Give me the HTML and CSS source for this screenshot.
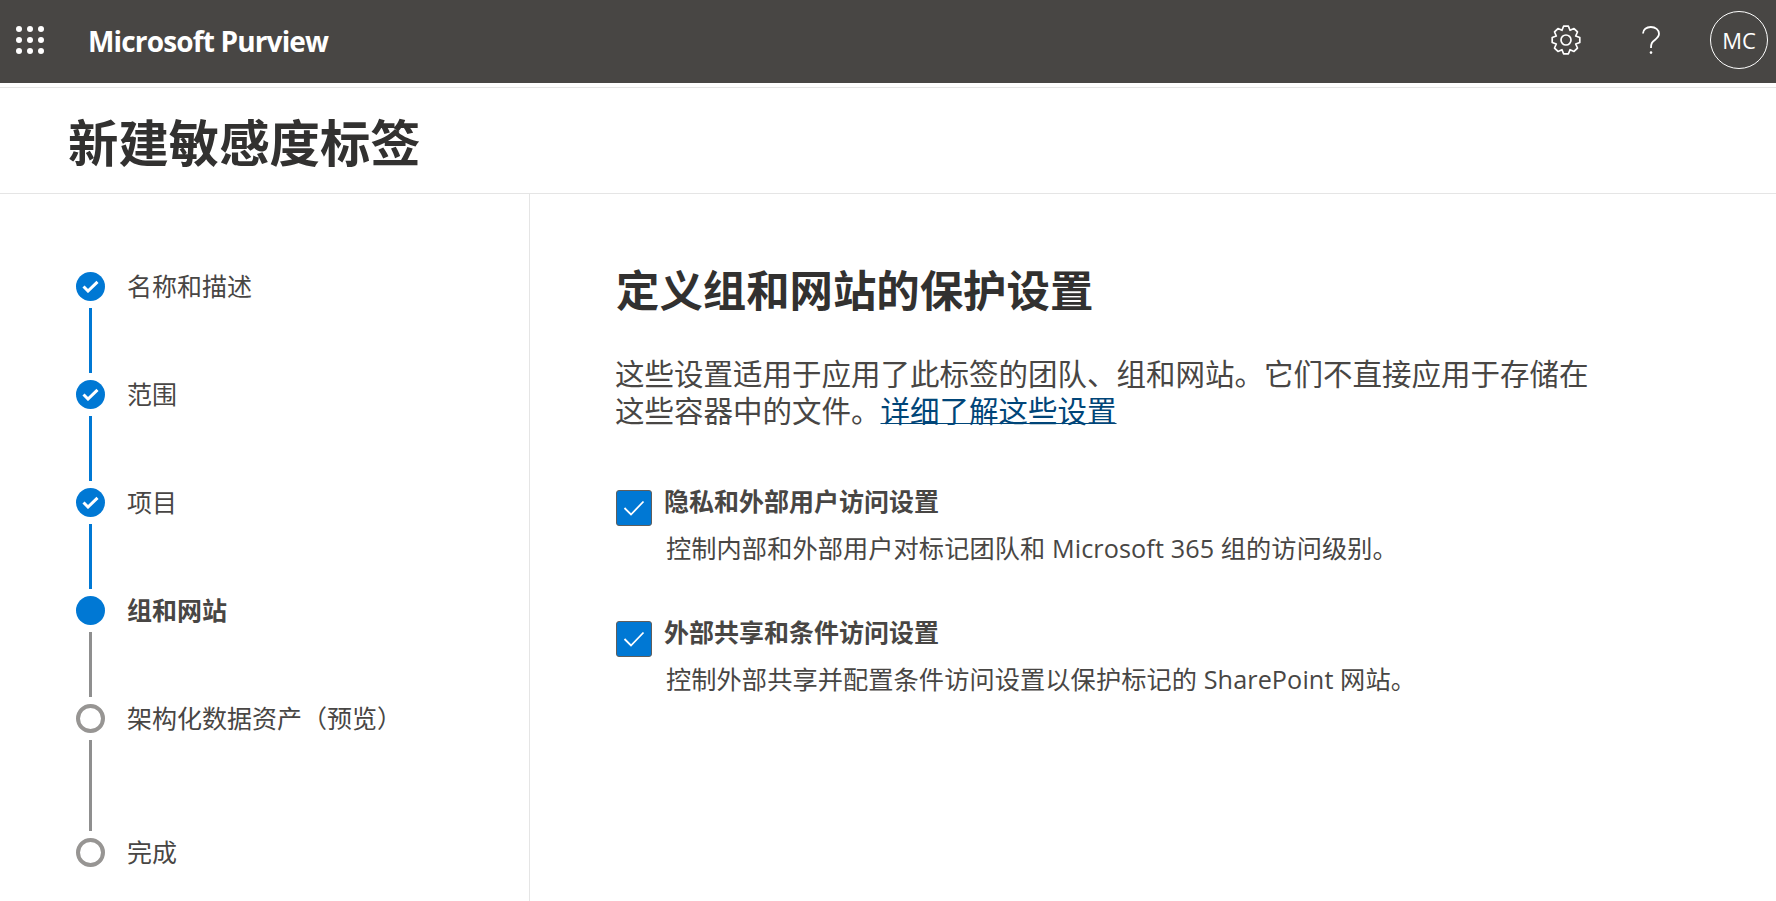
FILE: index.html
```html
<!DOCTYPE html>
<html lang="zh-CN">
  <head>
    <meta charset="UTF-8" />
    <meta name="viewport" content="width=device-width, initial-scale=1.0" />
    <title>新建敏感度标签</title>
    <link rel="stylesheet" href="styles.css">
  </head>
  <body>
    <header class="topbar">
      <svg class="waffle" width="30" height="30" viewBox="0 0 30 30" fill="#fff">
        <circle cx="4" cy="4" r="3" /><circle cx="15" cy="4" r="3" /><circle cx="26" cy="4" r="3" />
        <circle cx="4" cy="15" r="3" /><circle cx="15" cy="15" r="3" /><circle cx="26" cy="15" r="3" />
        <circle cx="4" cy="26" r="3" /><circle cx="15" cy="26" r="3" /><circle cx="26" cy="26" r="3" />
      </svg>
      <span class="brand">Microsoft Purview</span>
      <svg class="gear" width="30" height="30" viewBox="0 0 30 30" fill="none" stroke="#fff" stroke-width="1.7" stroke-linejoin="round">
        <path d="M28.79 12.57L28.79 17.43L24.7 19.02L26.47 23.03L23.03 26.47L19.02 24.7L17.43 28.79L12.57 28.79L10.98 24.7L6.97 26.47L3.53 23.03L5.3 19.02L1.21 17.43L1.21 12.57L5.3 10.98L3.53 6.97L6.97 3.53L10.98 5.3L12.57 1.21L17.43 1.21L19.02 5.3L23.03 3.53L26.47 6.97L24.7 10.98Z" />
        <circle cx="15" cy="15" r="5" />
      </svg>
      <svg class="help" width="18" height="29" viewBox="0 0 18 29" fill="none" stroke="#fff" stroke-width="1.8">
        <path d="M1 7.5C1 3.5 4.5 1 8.8 1C13.5 1 17 3.8 17 7.8C17 10.8 15 12.3 12.8 14C10 16.1 9 17.3 9 22" />
        <circle cx="9" cy="26.6" r="1.3" fill="#fff" stroke="none" />
      </svg>
      <div class="avatar">MC</div>
    </header>

    <div class="title-bar">
      <h1>新建敏感度标签</h1>
    </div>

    <div class="layout">
      <nav class="stepper">
        <div class="step done">
          <div class="marker">
            <span class="dot">
              <svg width="17" height="13" viewBox="0 0 17 13" fill="none" stroke="#fff" stroke-width="3"><path d="M1.5 6.5L6 11L15.5 1.8" /></svg>
            </span>
            <span class="line"></span>
          </div>
          <span class="step-label">名称和描述</span>
        </div>
        <div class="step done">
          <div class="marker">
            <span class="dot">
              <svg width="17" height="13" viewBox="0 0 17 13" fill="none" stroke="#fff" stroke-width="3"><path d="M1.5 6.5L6 11L15.5 1.8" /></svg>
            </span>
            <span class="line"></span>
          </div>
          <span class="step-label">范围</span>
        </div>
        <div class="step done">
          <div class="marker">
            <span class="dot">
              <svg width="17" height="13" viewBox="0 0 17 13" fill="none" stroke="#fff" stroke-width="3"><path d="M1.5 6.5L6 11L15.5 1.8" /></svg>
            </span>
            <span class="line"></span>
          </div>
          <span class="step-label">项目</span>
        </div>
        <div class="step current">
          <div class="marker">
            <span class="dot"></span>
            <span class="line"></span>
          </div>
          <span class="step-label">组和网站</span>
        </div>
        <div class="step todo long">
          <div class="marker">
            <span class="dot"></span>
            <span class="line"></span>
          </div>
          <span class="step-label">架构化数据资产（预览）</span>
        </div>
        <div class="step todo">
          <div class="marker">
            <span class="dot"></span>
          </div>
          <span class="step-label">完成</span>
        </div>
      </nav>

      <main class="content">
        <h2>定义组和网站的保护设置</h2>
        <p class="intro">这些设置适用于应用了此标签的团队、组和网站。它们不直接应用于存储在这些容器中的文件。<a href="#">详细了解这些设置</a></p>

        <div class="option">
          <span class="checkbox">
            <svg width="22" height="16" viewBox="0 0 22 16" fill="none" stroke="#fff" stroke-width="1.8"><path d="M1.5 8L8 14.5L20.5 1.5" /></svg>
          </span>
          <div class="option-text">
            <div class="option-title">隐私和外部用户访问设置</div>
            <div class="option-desc">控制内部和外部用户对标记团队和 Microsoft 365 组的访问级别。</div>
          </div>
        </div>

        <div class="option">
          <span class="checkbox">
            <svg width="22" height="16" viewBox="0 0 22 16" fill="none" stroke="#fff" stroke-width="1.8"><path d="M1.5 8L8 14.5L20.5 1.5" /></svg>
          </span>
          <div class="option-text">
            <div class="option-title">外部共享和条件访问设置</div>
            <div class="option-desc">控制外部共享并配置条件访问设置以保护标记的 SharePoint 网站。</div>
          </div>
        </div>
      </main>
    </div>
  </body>
</html>
```

FILE: styles.css
```css
* {
  box-sizing: border-box;
}

html,
body {
  height: 100%;
}

body {
  margin: 0;
  display: flex;
  flex-direction: column;
  overflow: hidden;
  background: #fff;
  color: #323130;
  font-family: "Open Sans", "Noto Sans CJK SC", sans-serif;
}

.topbar {
  display: flex;
  align-items: center;
  flex: none;
  height: 83px;
  padding: 0 8px 0 15px;
  background: #484644;
  color: #fff;
}

.waffle {
  margin: 0 43px 3px 0;
}

.brand {
  margin-bottom: 2px;
  font-size: 28px;
  font-weight: 700;
  letter-spacing: -0.85px;
}

.gear {
  margin: 0 61px 3px auto;
}

.help {
  margin: 0 50px 3px 0;
}

.avatar {
  display: flex;
  align-items: center;
  justify-content: center;
  width: 58px;
  height: 58px;
  margin-bottom: 3px;
  border: 1px solid #fff;
  border-radius: 50%;
  font-size: 22px;
}

.title-bar {
  flex: none;
  height: 107px;
  margin-top: 4px;
  padding: 22px 0 0 68px;
  border-top: 1px solid #e5e5e5;
  border-bottom: 1px solid #e5e5e5;
}

.title-bar h1 {
  margin: 0;
  font-size: 50.4px;
  line-height: 66px;
  font-weight: 700;
}

.layout {
  display: flex;
  flex: 1;
  min-height: 0;
}

.stepper {
  flex: none;
  width: 530px;
  padding: 78px 0 0 76px;
  border-right: 1px solid #e5e5e5;
}

.step {
  display: flex;
  gap: 22px;
}

.marker {
  display: flex;
  flex-direction: column;
  align-items: center;
  width: 29px;
}

.dot {
  display: flex;
  align-items: center;
  justify-content: center;
  width: 29px;
  height: 29px;
  border-radius: 50%;
  background: #0078d4;
}

.line {
  width: 3px;
  height: 65px;
  margin: 7px 0;
  background: #8f8f8f;
}

.step.long .line {
  height: 91px;
}

.done .line {
  background: #0078d4;
}

.todo .dot {
  border: 4px solid #979593;
  background: #fff;
}

.step-label {
  font-size: 25px;
  line-height: 29px;
  color: #484644;
  white-space: nowrap;
}

.current .step-label {
  font-weight: 700;
}

.content {
  padding: 67px 0 0 86px;
}

.content h2 {
  margin: 0;
  font-size: 43.4px;
  line-height: 60px;
  font-weight: 700;
}

.intro {
  width: 990px;
  margin: 34px 0 0 -1px;
  font-size: 29.5px;
  line-height: 37px;
  color: #484644;
}

.intro a {
  color: #004578;
  text-decoration: underline;
  text-decoration-thickness: 1px;
}

.option {
  display: flex;
  gap: 12px;
  margin-top: 53px;
}

.intro + .option {
  margin-top: 57px;
}

.checkbox {
  display: flex;
  flex: none;
  align-items: center;
  justify-content: center;
  width: 36px;
  height: 36px;
  margin-top: 4px;
  border: 1px solid #605e5c;
  border-radius: 3px;
  background: #0078d4;
}

.option-title {
  font-size: 25px;
  line-height: 30px;
  font-weight: 700;
  color: #484644;
}

.option-desc {
  margin: 16px 0 0 2px;
  font-size: 25.2px;
  line-height: 32px;
  letter-spacing: 0.1px;
  color: #484644;
  white-space: nowrap;
}
```
